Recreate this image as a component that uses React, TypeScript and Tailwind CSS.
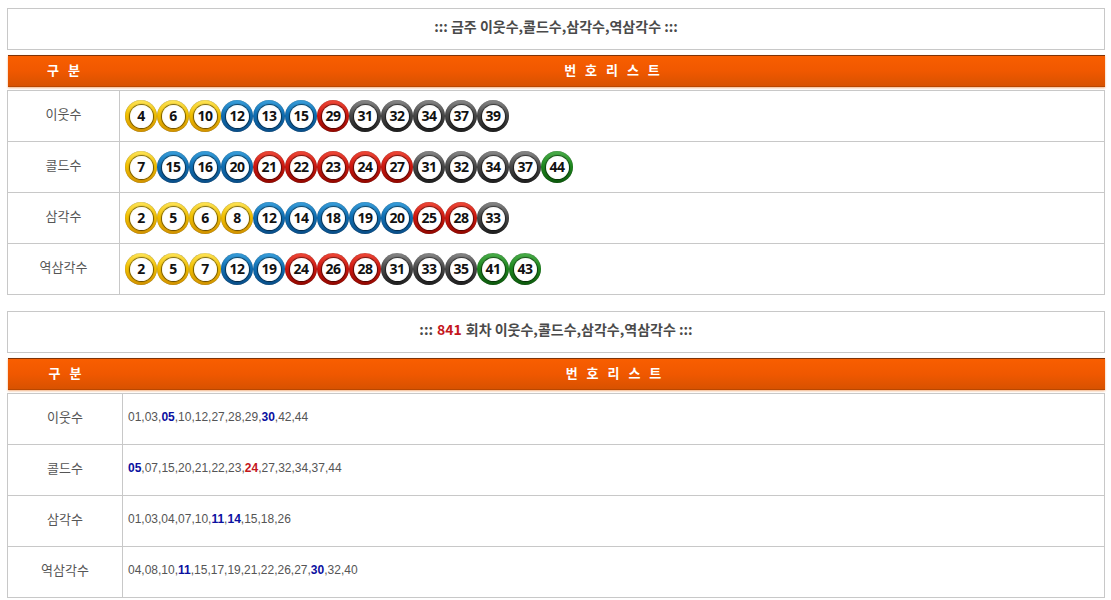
const ballStyles: Record<string, string> = {
  yellow: 'bg-[linear-gradient(to_bottom,#ffe65a,#f2c000_45%,#d49400)]',
  blue: 'bg-[linear-gradient(to_bottom,#3aa0dc,#0f6fb4_45%,#0a4f8a)]',
  red: 'bg-[linear-gradient(to_bottom,#f04a3a,#d01810_45%,#940800)]',
  gray: 'bg-[linear-gradient(to_bottom,#8a8a8a,#4a4a4a_45%,#1e1e1e)]',
  green: 'bg-[linear-gradient(to_bottom,#4cae4c,#1f8a1f_45%,#0d5a0d)]',
}

const colorOf = (n: number) => {
  if (n <= 10) return 'yellow'
  if (n <= 20) return 'blue'
  if (n <= 30) return 'red'
  if (n <= 40) return 'gray'
  return 'green'
}

const Ball = ({ n }: { n: number }) => (
  <div
    className={`w-[32px] h-[32px] shrink-0 rounded-full flex items-center justify-center shadow-[inset_0_0_1px_rgba(0,0,0,0.5)] ${ballStyles[colorOf(n)]}`}
  >
    <div className="w-[23px] h-[23px] rounded-full bg-[radial-gradient(circle,#ffffff_60%,#e6e6e6)] shadow-[0_0_1px_1px_rgba(0,0,0,0.55)] flex items-center justify-center">
      <span className="text-[14px] font-bold text-[#111] leading-none tracking-[-0.5px]" style={{ fontFamily: '"Open Sans", sans-serif' }}>
        {n}
      </span>
    </div>
  </div>
)

const Header = ({ first }: { first: number }) => (
  <div
    className="mt-[5px] h-[32px] flex items-center pb-[3px] border-t border-[#7d3308] border-b border-b-[#b94700] bg-[linear-gradient(to_bottom,#f85e00,#f05800_50%,#d85200)] shadow-[0_1px_2px_#f3b080] text-white font-bold text-[13px]"
    style={{ width: 1097, marginLeft: 1 }}
  >
    <div className="text-center tracking-[3px] pl-[3px]" style={{ width: first - 1 }}>
      구 분
    </div>
    <div className="flex-1 text-center tracking-[3px] pl-[3px]">번 호 리 스 트</div>
  </div>
)

const TitleBox = ({ children }: { children: React.ReactNode }) => (
  <div className="h-[42px] pb-[5px] border border-[#c8c8c8] flex items-center justify-center text-[14px] font-bold text-[#4a4a4a]">
    {children}
  </div>
)

const Row = ({ label, first, last, children }: { label: string; first: number; last?: boolean; children: React.ReactNode }) => (
  <div className={`flex ${last ? 'h-[50px]' : 'h-[51px] border-b border-[#c8c8c8]'}`}>
    <div className="border-r border-[#c8c8c8] pb-[5px] flex items-center justify-center text-[13px] text-[#555]" style={{ width: first }}>
      {label}
    </div>
    <div className="flex-1 flex items-center pl-[5px]">{children}</div>
  </div>
)

const ballRows: [string, number[]][] = [
  ['이웃수', [4, 6, 10, 12, 13, 15, 29, 31, 32, 34, 37, 39]],
  ['콜드수', [7, 15, 16, 20, 21, 22, 23, 24, 27, 31, 32, 34, 37, 44]],
  ['삼각수', [2, 5, 6, 8, 12, 14, 18, 19, 20, 25, 28, 33]],
  ['역삼각수', [2, 5, 7, 12, 19, 24, 26, 28, 31, 33, 35, 41, 43]],
]

type Mark = { t: string; c?: 'b' | 'r' }
const textRows: [string, Mark[]][] = [
  ['이웃수', [{ t: '01,03,' }, { t: '05', c: 'b' }, { t: ',10,12,27,28,29,' }, { t: '30', c: 'b' }, { t: ',42,44' }]],
  ['콜드수', [{ t: '05', c: 'b' }, { t: ',07,15,20,21,22,23,' }, { t: '24', c: 'r' }, { t: ',27,32,34,37,44' }]],
  ['삼각수', [{ t: '01,03,04,07,10,' }, { t: '11', c: 'b' }, { t: ',' }, { t: '14', c: 'b' }, { t: ',15,18,26' }]],
  ['역삼각수', [{ t: '04,08,10,' }, { t: '11', c: 'b' }, { t: ',15,17,19,21,22,26,27,' }, { t: '30', c: 'b' }, { t: ',32,40' }]],
]

export default function App() {
  return (
    <div className="bg-white min-h-[600px] pt-[8px]" style={{ fontFamily: '"Noto Sans CJK KR", "Noto Sans", sans-serif' }}>
      <div className="ml-[7px] w-[1098px]">
        <TitleBox>::: 금주 이웃수,콜드수,삼각수,역삼각수 :::</TitleBox>
        <Header first={112} />
        <div className="mt-[3px] border border-[#c8c8c8]">
          {ballRows.map(([label, nums], i) => (
            <Row key={label} label={label} first={112} last={i === ballRows.length - 1}>
              <div className="flex">
                {nums.map((n, j) => (
                  <Ball key={j} n={n} />
                ))}
              </div>
            </Row>
          ))}
        </div>

        <div className="mt-[16px]">
          <TitleBox>
            ::: <span className="text-[#c4161c] mx-[4px]">841</span> 회차 이웃수,콜드수,삼각수,역삼각수 :::
          </TitleBox>
        </div>
        <Header first={115} />
        <div className="mt-[3px] border border-[#c8c8c8]">
          {textRows.map(([label, parts], i) => (
            <Row key={label} label={label} first={115} last={i === textRows.length - 1}>
              <span className="text-[12px] text-[#555] pb-[4px]" style={{ fontFamily: '"Liberation Sans", sans-serif' }}>
                {parts.map((p, j) =>
                  p.c ? (
                    <b key={j} className={p.c === 'b' ? 'text-[#0a10a0]' : 'text-[#c4161c]'}>
                      {p.t}
                    </b>
                  ) : (
                    <span key={j}>{p.t}</span>
                  ),
                )}
              </span>
            </Row>
          ))}
        </div>
      </div>
    </div>
  )
}
